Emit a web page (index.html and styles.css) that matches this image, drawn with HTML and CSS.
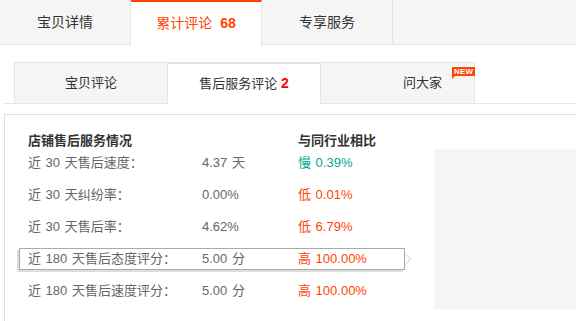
FILE: index.html
```html
<!DOCTYPE html>
<html lang="zh-CN">
<head>
    <meta charset="UTF-8">
    <title>累计评论 - 售后服务评论</title>
    <link rel="stylesheet" href="styles.css">
</head>
<body>
    <div class="main-tabs">
        <div class="main-tab">宝贝详情</div>
        <div class="main-tab active">累计评论 <span class="count">68</span></div>
        <div class="main-tab">专享服务</div>
    </div>

    <div class="sub-tabs">
        <div class="sub-tab">宝贝评论</div>
        <div class="sub-tab active">售后服务评论 <span class="num">2</span></div>
        <div class="sub-tab ask"><span class="ask-label">问大家<span class="badge">NEW</span></span></div>
    </div>

    <div class="service">
        <div class="stats">
            <div class="row head">
                <span class="label">店铺售后服务情况</span>
                <span class="value"></span>
                <span class="compare">与同行业相比</span>
            </div>
            <div class="row">
                <span class="label">近 30 天售后速度：</span>
                <span class="value">4.37 天</span>
                <span class="compare slow">慢 0.39%</span>
            </div>
            <div class="row">
                <span class="label">近 30 天纠纷率：</span>
                <span class="value">0.00%</span>
                <span class="compare good">低 0.01%</span>
            </div>
            <div class="row">
                <span class="label">近 30 天售后率：</span>
                <span class="value">4.62%</span>
                <span class="compare good">低 6.79%</span>
            </div>
            <div class="row current">
                <span class="label">近 180 天售后态度评分：</span>
                <span class="value">5.00 分</span>
                <span class="compare good">高 100.00%</span>
            </div>
            <div class="row">
                <span class="label">近 180 天售后速度评分：</span>
                <span class="value">5.00 分</span>
                <span class="compare good">高 100.00%</span>
            </div>
        </div>
        <div class="chart"></div>
    </div>
</body>
</html>
```

FILE: styles.css
```css
/* 评论页 - 售后服务 */
body {
    margin: 0;
    font-family: "Liberation Sans", "Noto Sans CJK SC", sans-serif;
    color: #333;
    background: #fff;
}

/* 顶部大标签 */
.main-tabs {
    display: flex;
    height: 44px;
    background: #f5f5f5;
    border-bottom: 1px solid #e5e5e5;
}
.main-tab {
    width: 130px;
    border-right: 1px solid #e5e5e5;
    text-align: center;
    line-height: 44px;
    font-size: 14px;
    color: #333;
}
.main-tab.active {
    background: #fff;
    border-top: 2px solid #f40;
    line-height: 42px;
    height: 43px;
    margin-bottom: -1px;
    padding-bottom: 1px;
    color: #f40;
}
.main-tab .count {
    font-weight: bold;
    margin-left: 4px;
    font-size: 14px;
}

/* 评论子标签 */
.sub-tabs {
    display: flex;
    margin: 17px 0 0 4px;
    padding-left: 10px;
    border-bottom: 1px solid #e5e5e5;
    height: 41px;
}
.sub-tab {
    box-sizing: border-box;
    width: 154px;
    height: 41px;
    margin-right: -1px;
    border: 1px solid #e5e5e5;
    border-bottom: none;
    background: #f5f5f5;
    text-align: center;
    line-height: 40px;
    font-size: 13px;
    color: #333;
}
.sub-tab.active {
    background: #fff;
    border-top: 2px solid #e0e0e0;
    line-height: 39px;
    height: 42px;
    position: relative;
    z-index: 1;
}
.sub-tab .num {
    color: #f00;
    font-weight: bold;
    font-size: 14px;
}
.sub-tab.ask {
    width: 155px;
    padding-left: 50px;
}
.ask-label {
    position: relative;
}
.badge {
    position: absolute;
    left: 49px;
    top: -8px;
    height: 9px;
    padding: 0 2px;
    background: #f40;
    color: #fff;
    font-size: 8px;
    line-height: 9px;
    font-weight: bold;
    letter-spacing: 0.2px;
}
.badge::after {
    content: "";
    position: absolute;
    left: 0;
    top: 9px;
    border-top: 3px solid #f40;
    border-right: 3px solid transparent;
}

/* 售后服务情况 */
.service {
    display: flex;
    margin: 10px 0 0 4px;
    border-top: 1px solid #e0e0e0;
    border-left: 1px solid #e0e0e0;
    height: 206px;
}
.stats {
    width: 415px;
    padding: 15px 0 0 14px;
}
.row {
    display: flex;
    width: 386px;
    box-sizing: border-box;
    height: 22px;
    margin-bottom: 10px;
    padding-left: 8px;
    border: 1px solid transparent;
    line-height: 20px;
    font-size: 13px;
    color: #666;
    position: relative;
    word-spacing: 1px;
}
.row.head {
    margin-bottom: 0;
    font-weight: bold;
    color: #333;
}
.row .label {
    width: 174px;
}
.row .value {
    width: 96px;
}
.compare.slow {
    color: #00a98f;
}
.compare.good {
    color: #f40;
}
.row.current {
    border-color: #aaa;
    background: #fff;
    box-shadow: -2px 2px 0 #ddd;
}
.row.current::before {
    content: "";
    position: absolute;
    right: -7px;
    top: 4px;
    border-top: 6px solid transparent;
    border-bottom: 6px solid transparent;
    border-left: 6px solid #ccc;
}
.row.current::after {
    content: "";
    position: absolute;
    right: -6px;
    top: 5px;
    border-top: 5px solid transparent;
    border-bottom: 5px solid transparent;
    border-left: 5px solid #fff;
}
.chart {
    flex: 1;
    margin-top: 34px;
    height: 160px;
    background: #f5f5f5;
}
```
